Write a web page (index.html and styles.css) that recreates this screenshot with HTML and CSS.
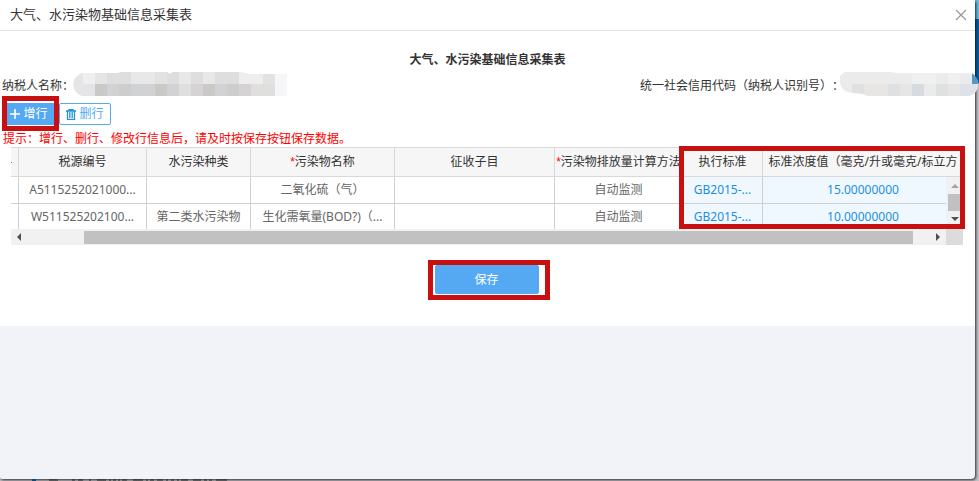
FILE: index.html
```
<!DOCTYPE html>
<html lang="zh-CN">
<head>
    <meta charset="UTF-8">
    <meta name="viewport" content="width=device-width, initial-scale=1.0">
    <title>大气、水污染物基础信息采集表</title>
    <link rel="stylesheet" href="styles.css">
</head>
<body>
    <div class="dialog">
        <div class="dialog-header">
            <span>大气、水污染物基础信息采集表</span>
            <button class="close-btn" aria-label="关闭">
                <svg width="12" height="12" viewBox="0 0 12 12"><path d="M1 1L11 11M11 1L1 11" stroke="#999" stroke-width="1.2"/></svg>
            </button>
        </div>

        <div class="form-panel">
            <h2>大气、水污染基础信息采集表</h2>

            <div class="taxpayer">
                <div class="field">
                    <span>纳税人名称：</span>
                    <svg class="mask" width="214" height="24" viewBox="0 0 214 24">
                        <clipPath id="nameShape"><path d="M12 1H44L50 0H94L97 2L100 0H166L176 2H214V24H12A11 11 0 0 1 12 1Z"/></clipPath>
                        <g clip-path="url(#nameShape)">
                            <path d="M0 0H214V24H0Z" fill="#e2e2e2"/>
                            <path d="M0 0H10V24H0ZM22 0H34V12H22Z" fill="#e6e5e5"/>
                            <path d="M10 0H22V12H10Z" fill="#efefef"/>
                            <path d="M10 12H22V24H10Z" fill="#e4e4e6"/>
                            <path d="M58 0H82V12H58ZM106 0H118V12H106ZM130 0H142V12H130Z" fill="#e8e8e8"/>
                            <path d="M34 0H58V12H34ZM94 0H106V12H94ZM118 0H130V12H118ZM142 0H166V12H142Z" fill="#dedede"/>
                            <path d="M166 0H190V12H166Z" fill="#eeeeee"/>
                            <path d="M22 12H34V24H22ZM82 12H94V24H82ZM130 12H142V24H130Z" fill="#c9c9c7"/>
                            <path d="M34 12H46V24H34ZM58 12H82V24H58ZM94 12H106V24H94ZM142 12H154V24H142Z" fill="#d1d2d4"/>
                            <path d="M46 12H58V24H46ZM154 12H166V24H154Z" fill="#cdcdcd"/>
                            <path d="M118 12H130V24H118ZM166 12H178V24H166Z" fill="#d5d3d3"/>
                            <path d="M106 12H118V24H106ZM178 12H202V24H178Z" fill="#dfdfde"/>
                            <path d="M202 0H214V24H202Z" fill="#f6f6f8"/>
                        </g>
                    </svg>
                </div>
                <div class="field field-code">
                    <span>统一社会信用代码（纳税人识别号）：</span>
                    <svg class="mask mask-code" width="138" height="24" viewBox="0 0 138 24">
                        <path d="M4 0H50L56 1H126A11 11 0 0 1 138 13A11 11 0 0 1 128 24H28L20 21H12A12 12 0 0 1 0 10V4Z" fill="#ebebec"/>
                        <path d="M12 12H24V22L12 21ZM48 12H60V24H48ZM96 12H108V24H96Z" fill="#dfe0e2"/>
                        <path d="M24 12H48V24H28L24 22ZM60 12H72V24H60ZM108 12H120V24H108Z" fill="#e8e6e4"/>
                        <path d="M72 12H84V24H72Z" fill="#d6dbe1"/>
                        <path d="M72 1H96V12H72ZM108 1H120V12H108Z" fill="#eff1f1"/>
                        <path d="M120 12H138A11 11 0 0 1 128 24H120Z" fill="#dde2e8"/>
                        <path d="M132 1A14 14 0 0 1 138 12H132Z" fill="#5a93bd"/>
                    </svg>
                </div>
            </div>

            <div class="toolbar">
                <div class="marked mark-add">
                    <button class="btn btn-primary">
                        <svg width="10" height="10" viewBox="0 0 10 10"><path d="M5 0V10M0 5H10" stroke="#fff" stroke-width="1.6"/></svg>
                        增行
                    </button>
                </div>
                <button class="btn">
                    <svg width="10" height="11" viewBox="0 0 10 11"><path d="M0 2H10M3 2V0.6H7V2M1.5 2V10.3H8.5V2M3.8 3V9M6.2 3V9" fill="none" stroke="#1f95d2" stroke-width="1.3"/></svg>
                    删行
                </button>
            </div>

            <p class="tip">提示：增行、删行、修改行信息后，请及时按保存按钮保存数据。</p>

            <div class="grid">
                <div class="grid-view">
                    <table>
                        <colgroup>
                            <col class="col-edge"><col class="col-no"><col class="col-kind"><col class="col-name">
                            <col class="col-item"><col class="col-method"><col class="col-std"><col>
                        </colgroup>
                        <thead>
                            <tr>
                                <th class="edge"></th>
                                <th>税源编号</th>
                                <th>水污染种类</th>
                                <th><span class="required">*</span>污染物名称</th>
                                <th>征收子目</th>
                                <th><span class="required">*</span>污染物排放量计算方法</th>
                                <th>执行标准</th>
                                <th>标准浓度值（毫克/升或毫克/标立方</th>
                            </tr>
                        </thead>
                        <tbody>
                            <tr>
                                <td></td>
                                <td>A5115252021000...</td>
                                <td></td>
                                <td>二氧化硫（气）</td>
                                <td></td>
                                <td>自动监测</td>
                                <td class="editable">GB2015-...</td>
                                <td class="editable">15.00000000</td>
                            </tr>
                            <tr>
                                <td></td>
                                <td>W511525202100...</td>
                                <td>第二类水污染物</td>
                                <td>生化需氧量(BOD?)（...</td>
                                <td></td>
                                <td>自动监测</td>
                                <td class="editable">GB2015-...</td>
                                <td class="editable">10.00000000</td>
                            </tr>
                        </tbody>
                    </table>
                    <div class="scroll-y">
                        <span class="arrow arrow-up"></span>
                        <span class="thumb-y"></span>
                        <span class="arrow arrow-down"></span>
                    </div>
                </div>
                <div class="scroll-x">
                    <span class="arrow arrow-left"></span>
                    <span class="track-x"><span class="thumb-x"></span></span>
                    <span class="arrow arrow-right"></span>
                    <span class="corner"></span>
                </div>
            </div>

            <div class="actions">
                <div class="marked mark-save">
                    <button class="btn btn-primary btn-save">保存</button>
                </div>
            </div>
        </div>
    </div>

    <svg class="page-behind" width="240" height="2" viewBox="0 0 240 2">
        <path d="M32 0H36V2H32Z" fill="#0b4a7c"/>
        <path d="M49 1H58M72 1H75M78 1H83M89 1H91M97 1H106M109 1H111M113 1H116M118 1H120M122 1H127M133 1H143M146 1H148M150 1H154M157 1H163M166 1H168M171 1H174M177 1H179M181 1H188M193 1H201M204 1H207M209 1H212M216 1H227" stroke="#222" stroke-width="1"/>
    </svg>
</body>
</html>
```
FILE: styles.css
```
*,
*::before,
*::after {
    margin: 0;
    padding: 0;
    box-sizing: border-box;
}

body {
    min-height: 100vh;
    padding: 0 4px 2px 0;
    position: relative;
    background: linear-gradient(#6fb9dc 0, #6fb9dc 19px, #0a5c9f 19px, #0a5c9f 83px, #c3c3c8 83px);
    font-family: "Noto Sans", "Noto Sans CJK SC", sans-serif;
    font-size: 12px;
    line-height: 18px;
    color: #333;
    text-spacing-trim: space-all;
}

.dialog {
    min-height: calc(100vh - 2px);
    background: #f2f3f8;
    border-radius: 0 2px 4px 2px;
    box-shadow: 1px 1px 3px rgba(0, 0, 0, 0.8);
}

.dialog-header {
    display: flex;
    justify-content: space-between;
    align-items: center;
    height: 31px;
    padding: 0 8px 2px 10px;
    background: #fff;
    border-bottom: 1px solid #e3e3e6;
    font-size: 13px;
}

.close-btn {
    display: flex;
    padding-top: 2px;
    border: none;
    background: none;
    cursor: pointer;
}

.form-panel {
    padding: 20px 0 31px;
    background: #fff;
}

h2 {
    font-size: 12px;
    font-weight: bold;
    text-align: center;
}

.taxpayer {
    display: flex;
    justify-content: space-between;
    height: 32px;
    padding: 3px 0 0 2px;
}

.field {
    display: flex;
    height: 24px;
}

.field span {
    padding-top: 5px;
}

.field-code {
    margin-right: -3px;
}

.mask {
    margin-left: -1px;
}

.mask-code {
    position: relative;
    margin-left: -4px;
}

.toolbar {
    display: flex;
    gap: 4px;
    padding: 2px 3px 4px;
}

.btn {
    display: flex;
    justify-content: center;
    align-items: center;
    gap: 3px;
    width: 52px;
    height: 22px;
    border: 1px solid #54a9f2;
    border-radius: 2px;
    background: #fff;
    color: #54a9f2;
    font: inherit;
    cursor: pointer;
}

.btn-primary {
    background: #54a9f2;
    color: #fff;
}

.btn-save {
    width: 104px;
    height: 29px;
}

.marked {
    position: relative;
}

.marked::after,
.grid::after {
    content: "";
    position: absolute;
    border: 5px solid #c91010;
    pointer-events: none;
}

.mark-add::after {
    inset: -7px -4px -6px -1px;
}

.mark-save::after {
    inset: -5px -11px -6px -7px;
}

.tip {
    padding: 1px 0 0 3px;
    line-height: 17px;
    color: #f00;
}

.grid {
    position: relative;
    margin: 0 12px 0 11px;
}

.grid::after {
    top: -1px;
    right: -2px;
    width: 286px;
    height: 83px;
}

.grid-view {
    position: relative;
    height: 82px;
    overflow: hidden;
}

table {
    width: 100%;
    table-layout: fixed;
    border-collapse: separate;
    border-spacing: 0;
}

.col-edge {
    width: 8px;
}

.col-no,
.col-method {
    width: 128px;
}

.col-kind {
    width: 104px;
}

.col-name {
    width: 144px;
}

.col-item {
    width: 160px;
}

.col-std {
    width: 80px;
}

th,
td {
    height: 27px;
    border-right: 1px solid #d0d0d0;
    border-bottom: 1px solid #d0d0d0;
    overflow: hidden;
    text-align: center;
    white-space: nowrap;
}

th {
    height: 30px;
    border-top: 1px solid #d9d9d9;
    border-color: #d9d9d9;
    background: #f6f6f6;
    font-weight: normal;
}

td {
    color: #666;
}

th:last-child,
td:last-child {
    border-right: none;
}

/* end of the link in the column scrolled out of view */
.edge::before {
    content: "";
    display: block;
    width: 1px;
    height: 1px;
    background: #1f95d2;
}

.required {
    color: #f00;
    font-family: "Liberation Sans", sans-serif;
}

.editable {
    background: #f0f8ff;
    color: #1c8fdc;
}

.scroll-y {
    position: absolute;
    right: 0;
    top: 30px;
    bottom: 0;
    display: flex;
    flex-direction: column;
    justify-content: space-between;
    align-items: center;
    width: 17px;
    padding: 7px 0 8px;
    background: #f1f1f1;
}

.thumb-y {
    width: 13px;
    height: 17px;
    background: #c1c1c1;
}

.arrow {
    border: 4px solid transparent;
}

.arrow-up {
    border-top: none;
    border-bottom-color: #a3a3a3;
}

.arrow-down {
    border-bottom: none;
    border-top-color: #505050;
}

.arrow-left {
    border-left: none;
    border-right-color: #505050;
}

.arrow-right {
    border-right: none;
    border-left-color: #505050;
}

.scroll-x {
    display: flex;
    align-items: center;
    height: 16px;
    padding-left: 6px;
    background: #f1f1f1;
}

.track-x {
    flex: 1;
    display: flex;
    padding: 0 23px 0 63px;
}

.thumb-x {
    flex: 1;
    height: 13px;
    background: #c1c1c1;
}

.corner {
    width: 17px;
    height: 16px;
    margin-left: 6px;
    background: #dcdcdc;
}

.actions {
    display: flex;
    justify-content: center;
    padding: 20px 2px 1px 0;
}

/* strip of the page under the dialog */
.page-behind {
    position: absolute;
    left: 0;
    bottom: 0;
}
```
